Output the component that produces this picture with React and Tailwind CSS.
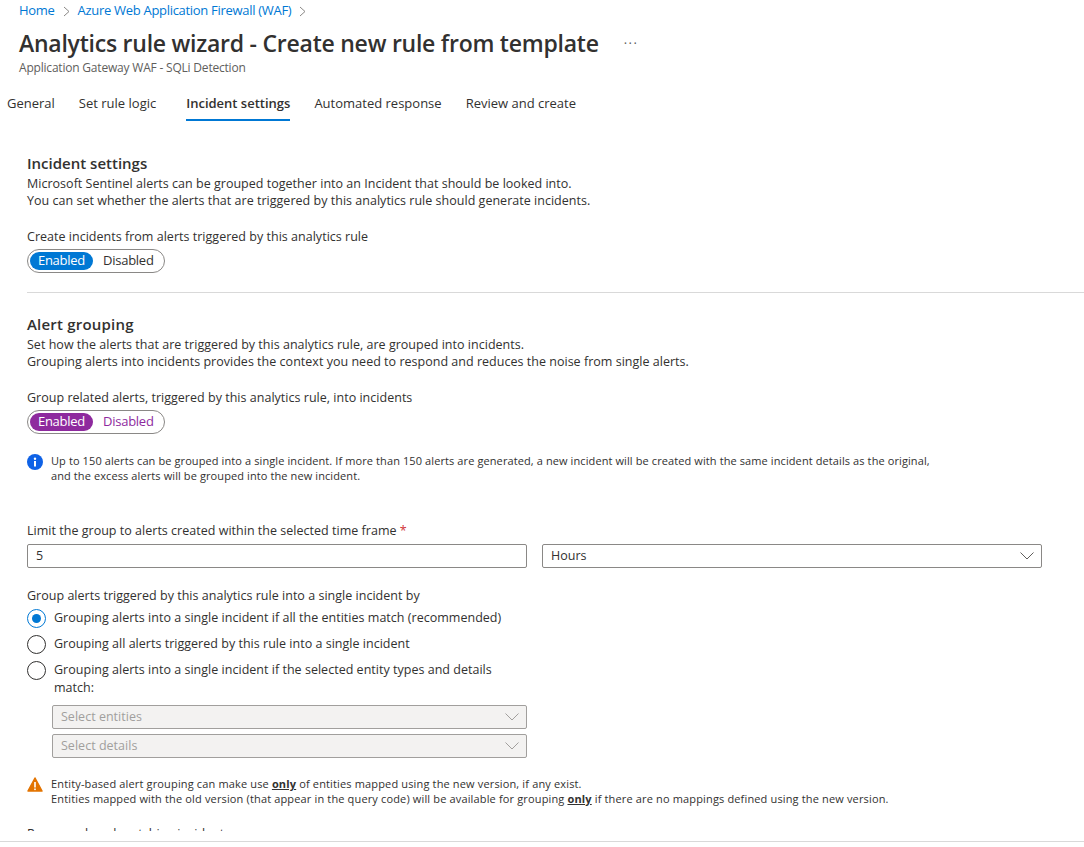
const font = { fontFamily: '"Open Sans", sans-serif' };

function Chevron({ className = "stroke-[#605e5c]" }) {
  return (
    <svg width="14" height="8" viewBox="0 0 14 8" fill="none" className={className}>
      <path d="M.5.500l6.500 6.500 6.500-6.500" strokeWidth="1" />
    </svg>
  );
}

function Crumb() {
  return (
    <svg width="7" height="11" viewBox="0 0 7 11" fill="none" stroke="#8a8886">
      <path d="M1 1l5 4.500-5 4.500" strokeWidth="1" />
    </svg>
  );
}

function Toggle({ purple }) {
  return (
    <div className="flex h-6 w-[138px] items-center rounded-full border border-[#8a8886] pl-[2px] text-[13px] tracking-[-0.25px]">
      <span
        className={`flex h-[18px] w-[63px] items-center justify-center rounded-full text-white ${
          purple ? "bg-[#8e2a9e]" : "bg-[#0078d4]"
        }`}
      >
        Enabled
      </span>
      <span className={`ml-[10px] ${purple ? "text-[#8e2a9e]" : "text-[#323130]"}`}>
        Disabled
      </span>
    </div>
  );
}

function Radio({ checked, children }) {
  return (
    <div className="flex items-start gap-2">
      <span
        className={`flex h-[19px] w-[19px] shrink-0 items-center justify-center rounded-full border ${
          checked ? "border-[#0078d4]" : "border-[#323130]"
        }`}
      >
        {checked && <span className="h-[9px] w-[9px] rounded-full bg-[#0078d4]" />}
      </span>
      <span className="w-[450px] leading-[18px]">{children}</span>
    </div>
  );
}

function DisabledSelect({ label }) {
  return (
    <div className="flex h-6 w-[475px] items-center justify-between rounded-[2px] border border-[#a19f9d] bg-[#f3f2f1] pr-[7px] pl-2 text-[#a19f9d]">
      <span>{label}</span>
      <Chevron className="stroke-[#a19f9d]" />
    </div>
  );
}

export default function App() {
  return (
    <div
      style={font}
      className="relative h-[847px] w-[1084px] overflow-hidden bg-white text-[12.5px] tracking-[0.02px] text-[#323130]"
    >
      {/* header */}
      <div className="mt-px flex h-5 items-center gap-2 pl-[19px] text-[13px] tracking-[-0.3px] text-[#0078d4]">
        <span>Home</span>
        <Crumb />
        <span>Azure Web Application Firewall (WAF)</span>
        <Crumb />
      </div>
      <div className="mt-[5px] flex h-[34px] items-center pl-[19px]">
        <h1 className="text-[23px] leading-[34px] font-semibold tracking-[-0.24px] text-[#323130]">
          Analytics rule wizard - Create new rule from template
        </h1>
        <span className="ml-[25px] text-[13px] leading-none tracking-[1.5px] text-[#605e5c]">···</span>
      </div>
      <div className="mt-px h-[14px] pl-[19px] text-[12px] leading-[14px] tracking-[-0.2px] text-[#605e5c]">
        Application Gateway WAF - SQLi Detection
      </div>

      {/* tabs */}
      <div className="mt-[16px] flex h-[30px] gap-[24px] pl-[7px] text-[13px] leading-[24px] tracking-normal">
        <span>General</span>
        <span>Set rule logic</span>
        <span className="ml-[6px] h-[30px] border-b-2 border-[#0078d4] font-semibold">
          Incident settings
        </span>
        <span>Automated response</span>
        <span>Review and create</span>
      </div>

      <div className="pl-[27px]">
        {/* incident settings */}
        <h2 className="mt-[32px] text-[15px] leading-[20px] font-semibold tracking-normal">
          Incident settings
        </h2>
        <p className="mt-[2px] leading-[17px]">
          Microsoft Sentinel alerts can be grouped together into an Incident that should be looked into.
          <br />
          You can set whether the alerts that are triggered by this analytics rule should generate incidents.
        </p>
        <p className="mt-[19px] leading-[18px]">
          Create incidents from alerts triggered by this analytics rule
        </p>
        <div className="mt-[3px]">
          <Toggle />
        </div>
        <div className="mt-[19px] h-px bg-[#d9d9d9]" />

        {/* alert grouping */}
        <h2 className="mt-[21px] text-[15px] leading-[20px] font-semibold tracking-[0.2px]">
          Alert grouping
        </h2>
        <p className="mt-[2px] leading-[17px]">
          Set how the alerts that are triggered by this analytics rule, are grouped into incidents.
          <br />
          Grouping alerts into incidents provides the context you need to respond and reduces the noise from single alerts.
        </p>
        <p className="mt-[19px] leading-[18px]">
          Group related alerts, triggered by this analytics rule, into incidents
        </p>
        <div className="mt-[3px]">
          <Toggle purple />
        </div>

        <div className="mt-[19px] flex gap-2">
          <svg width="16" height="16" viewBox="0 0 16 16" className="mt-[1px] shrink-0">
            <circle cx="8" cy="8" r="8" fill="#0f62e6" />
            <rect x="7" y="7" width="2" height="5.500" fill="#fff" />
            <circle cx="8" cy="4.800" r="1.200" fill="#fff" />
          </svg>
          <p className="text-[11px] leading-[15px] tracking-[0.1px]">
            Up to 150 alerts can be grouped into a single incident. If more than 150 alerts are generated, a new incident will be created with the same incident details as the original,
            <br />
            and the excess alerts will be grouped into the new incident.
          </p>
        </div>

        {/* time frame */}
        <p className="mt-[39px] leading-[18px]">
          Limit the group to alerts created within the selected time frame <span className="text-[#d13438]">*</span>
        </p>
        <div className="mt-[4px] flex gap-[15px]">
          <div className="flex h-6 w-[500px] items-center rounded-[2px] border border-[#8a8886] pl-2">5</div>
          <div className="flex h-6 w-[500px] items-center justify-between rounded-[2px] border border-[#8a8886] pr-[7px] pl-2">
            <span>Hours</span>
            <Chevron />
          </div>
        </div>

        {/* grouping options */}
        <p className="mt-[19px] leading-[18px]">
          Group alerts triggered by this analytics rule into a single incident by
        </p>
        <div className="mt-[4px] flex flex-col gap-[7px]">
          <Radio checked>Grouping alerts into a single incident if all the entities match (recommended)</Radio>
          <Radio>Grouping all alerts triggered by this rule into a single incident</Radio>
          <Radio>Grouping alerts into a single incident if the selected entity types and details match:</Radio>
        </div>
        <div className="mt-[8px] ml-[25px] flex flex-col gap-[5px]">
          <DisabledSelect label="Select entities" />
          <DisabledSelect label="Select details" />
        </div>

        <div className="mt-[18px] flex gap-2">
          <svg width="16" height="15" viewBox="0 0 16 15" className="mt-[1px] shrink-0">
            <path d="M8 1l7 13H1z" fill="#e37400" stroke="#e37400" strokeWidth="1.500" strokeLinejoin="round" />
            <rect x="7.200" y="5" width="1.600" height="5.500" fill="#fff" />
            <rect x="7.200" y="11.500" width="1.600" height="1.600" fill="#fff" />
          </svg>
          <p className="text-[11px] leading-[15px] tracking-[0.15px]">
            Entity-based alert grouping can make use <b className="font-bold underline">only</b> of entities mapped using the new version, if any exist.
            <br />
            Entities mapped with the old version (that appear in the query code) will be available for grouping <b className="font-bold underline">only</b> if there are no mappings defined using the new version.
          </p>
        </div>
        <div className="mt-[19px] h-[6px] overflow-hidden leading-[18px]">
          Re-open closed matching incidents
        </div>
      </div>

      {/* footer line */}
      <div className="absolute right-0 bottom-[5px] left-0 h-px bg-[#d9d9d9]" />
    </div>
  );
}
